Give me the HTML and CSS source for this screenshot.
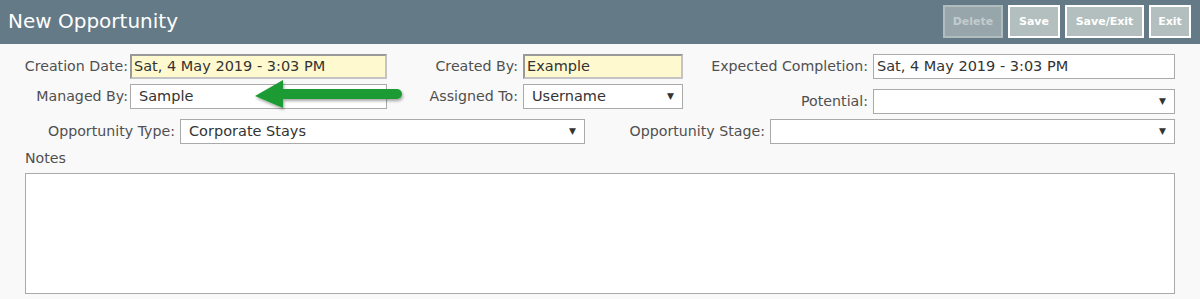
FILE: index.html
```html
<!DOCTYPE html>
<html lang="en">
<head>
    <meta charset="UTF-8">
    <title>New Opportunity</title>
    <link rel="stylesheet" href="styles.css">
</head>
<body>
    <div class="header">
        <h1>New Opportunity</h1>
        <div class="actions">
            <button class="btn b-del" disabled>Delete</button>
            <button class="btn b-save">Save</button>
            <button class="btn b-saveexit">Save/Exit</button>
            <button class="btn b-exit">Exit</button>
        </div>
    </div>

    <div class="form">
        <div class="row">
            <label class="lbl w1">Creation Date:</label>
            <div class="field readonly in1">Sat, 4 May 2019 - 3:03 PM</div>
            <label class="lbl w2">Created By:</label>
            <div class="field readonly in2">Example</div>
            <label class="lbl w3">Expected Completion:</label>
            <div class="field in3">Sat, 4 May 2019 - 3:03 PM</div>
        </div>
        <div class="row">
            <label class="lbl w1">Managed By:</label>
            <div class="field in1">Sample</div>
            <label class="lbl w2">Assigned To:</label>
            <div class="field select in2">Username<span class="caret">&#9660;</span></div>
            <div class="pot">
                <label class="lbl w3">Potential:</label>
                <div class="field select in3"><span class="caret">&#9660;</span></div>
            </div>
        </div>
        <div class="row">
            <label class="lbl w4">Opportunity Type:</label>
            <div class="field select in4">Corporate Stays<span class="caret">&#9660;</span></div>
            <label class="lbl w5">Opportunity Stage:</label>
            <div class="field select in4"><span class="caret">&#9660;</span></div>
        </div>
        <div class="notes-label">Notes</div>
        <div class="notes"></div>

        <!-- callout arrow -->
        <svg class="arrow" width="160" height="40" viewBox="0 0 160 40">
            <defs>
                <filter id="sh" x="-10%" y="-30%" width="130%" height="180%">
                    <feDropShadow dx="1" dy="2" stdDeviation="1.5" flood-color="#000" flood-opacity="0.35"/>
                </filter>
            </defs>
            <g filter="url(#sh)">
                <line x1="34" y1="18" x2="149" y2="18" stroke="#1f9b34" stroke-width="10" stroke-linecap="round"/>
                <polygon points="7,20 35,4 35,32" fill="#1f9b34"/>
            </g>
        </svg>
    </div>
</body>
</html>
```

FILE: styles.css
```css
body {
    margin: 0;
    background-color: #f9f9f9;
    font-family: 'DejaVu Sans', Verdana, sans-serif;
    color: #505050;
}

.header {
    background-color: #647a87;
    height: 44px;
    display: flex;
    align-items: center;
    justify-content: space-between;
    padding: 0 9px 0 8px;
}

h1 {
    margin: 0;
    color: #fff;
    font-size: 20px;
    font-weight: normal;
    margin-top: -2px;
}

.actions {
    display: flex;
    gap: 5px;
    margin-top: -2px;
}

.btn {
    background-color: #b3bfbe;
    border: 2px solid #fff;
    color: #fff;
    font-family: 'DejaVu Sans', Verdana, sans-serif;
    font-weight: bold;
    font-size: 11px;
    height: 33px;
    padding: 0;
}

.b-del { width: 60px; }
.b-save { width: 52px; }
.b-saveexit { width: 79px; }
.b-exit { width: 42px; }

.btn:disabled {
    background-color: #97a6ab;
    border-color: #b1bcbf;
    color: #c3cbcd;
}

.form {
    position: relative;
    padding: 10px 25px 0 8px;
}

.row {
    display: flex;
    align-items: flex-start;
    margin-bottom: 5px;
    font-size: 14.2px;
    white-space: nowrap;
}

.lbl {
    text-align: right;
    line-height: 25px;
    padding-right: 2px;
    box-sizing: border-box;
}

.w1 { width: 122px; }
.w2 { width: 136px; padding-right: 5px; }
.w3 { width: 190px; padding-right: 5px; }
.w4 { width: 172px; padding-right: 5px; }
.w5 { width: 185px; padding-right: 5px; }

.field {
    position: relative;
    box-sizing: border-box;
    height: 25px;
    line-height: 23px;
    border: 1px solid #aaa;
    background-color: #fff;
    padding-left: 8px;
    color: #333;
    font-size: 14.5px;
}

.readonly {
    background-color: #fff9d0;
    border: 2px solid #c4c4c4;
    border-top-color: #999;
    border-left-color: #999;
    line-height: 21px;
    padding-left: 2px;
}

.in1 { width: 257px; }
.in2 { width: 160px; }
.in3 { width: 302px; }
.in4 { width: 405px; }

.in3 { padding-left: 3px; }
.select { padding-left: 8px; }

.caret {
    position: absolute;
    right: 8px;
    top: 0;
    font-size: 9px;
    color: #333;
}

.pot {
    display: flex;
    margin-top: 5px;
}

.notes-label {
    padding-left: 17px;
    font-size: 14.2px;
    line-height: 18px;
    margin-top: 5px;
}

.notes {
    margin: 6px 0 0 17px;
    height: 119px;
    background-color: #fff;
    border: 1px solid #aaa;
}

.arrow {
    position: absolute;
    left: 248px;
    top: 32px;
}
```
